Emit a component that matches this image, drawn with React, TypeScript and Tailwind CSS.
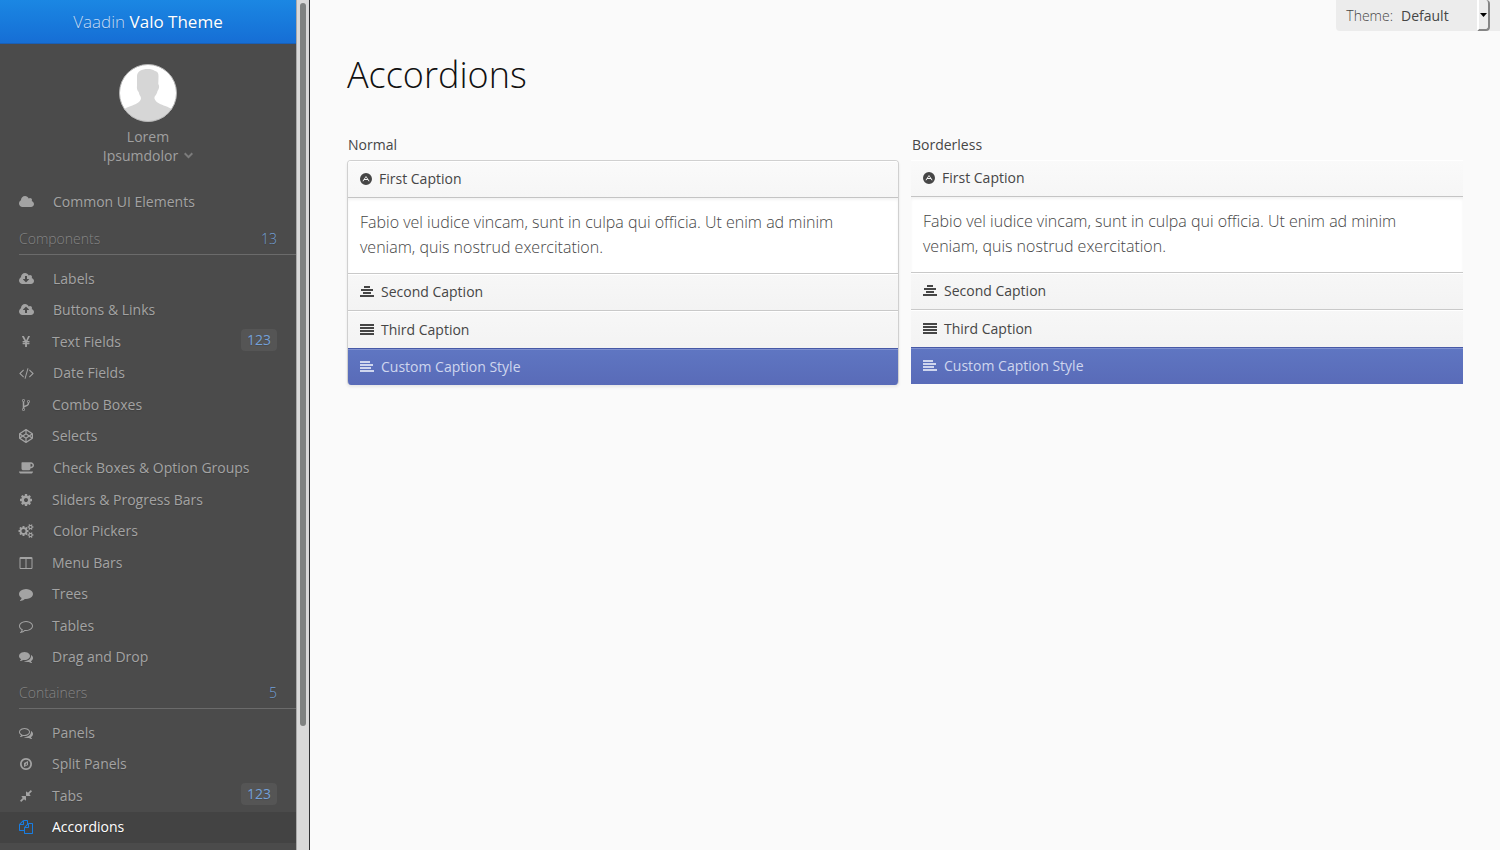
import React from "react";

type Glyph = { d: string; box: string; w: 14 | 15 | 12; evenOdd?: boolean };

const SQ = "0 0 1792 1792";
const WIDE = "0 0 1920 1792";
const CLOUD_BODY =
  "m640 288q0 159-112.5 271.5t-271.5 112.5h-1088q-185 0-316.5-131.5t-131.5-316.5q0-130 70-240t188-165q-2-30-2-43 0-212 150-362t362-150q156 0 285.5 87t188.5 231q71-62 166-62 106 0 181 75t75 181q0 76-41 138 130 31 213.5 135.5t83.5 238.5z";
const BUBBLE =
  "M1792 896q0 174-120 321.5t-326 233-450 85.5q-70 0-145-8-198 175-460 242-49 14-114 22-17 2-30.5-9t-17.5-29v-1q-3-4-.5-12t2-10 4.5-9.5l6-9 7-8.500 8-9q7-8 31-34.5t34.5-38 31-39.5 32.5-51 27-59 26-76q-157-89-247.5-220t-90.5-281q0-130 71-248.5t191-204.5 286-136.5 348-50.5q244 0 450 85.5t326 233 120 321.5z";
const SMALL_COG =
  "v140q0 16-149 31-12 27-30 52 51 113 51 138 0 4-4 7-122 71-124 71-8 0-46-47t-52-68q-20 2-30 2t-30-2q-14 21-52 68t-46 47q-2 0-124-71-4-3-4-7 0-25 51-138-18-25-30-52-149-15-149-31v-140q0-16 149-31 13-29 30-52-51-113-51-138 0-4 4-7 4-2 35-20t59-34 30-16q8 0 46 46.5t52 67.5q20-2 30-2t30 2q51-71 92-112l6-2q4 0 124 70 4 3 4 7 0 25-51 138 17 23 30 52 149 15 149 31z";

const glyphs: Record<string, Glyph> = {
  cloud: {
    w: 15,
    box: "64 0 1920 1792",
    d: "M1984 1152q0 159-112.5 271.5t-271.5 112.5h-1088q-185 0-316.5-131.5t-131.5-316.5q0-132 71-241.5t187-163.5q-2-28-2-43 0-212 150-362t362-150q158 0 286.5 88t187.5 230q70-62 166-62 106 0 181 75t75 181q0 75-41 138 129 30 213 134.5t84 239.5z",
  },
  cloudDown: {
    w: 15,
    box: "64 0 1920 1792",
    d:
      "M1344 928q0-14-9-23t-23-9h-224v-352q0-13-9.5-22.5t-22.5-9.5h-192q-13 0-22.5 9.5t-9.5 22.5v352h-224q-13 0-22.5 9.5t-9.5 22.5q0 14 9 23l352 352q9 9 23 9t23-9l351-351q10-12 10-24zm0-64" +
      CLOUD_BODY,
  },
  cloudUp: {
    w: 15,
    box: "64 0 1920 1792",
    d:
      "M1344 864q0-14-9-23l-352-352q-9-9-23-9t-23 9l-351 351q-10 12-10 24 0 14 9 23t23 9h224v352q0 13 9.5 22.5t22.5 9.5h192q13 0 22.5-9.5t9.5-22.5v-352h224q13 0 22.5-9.5t9.5-22.5z" +
      CLOUD_BODY,
  },
  yen: {
    w: 14,
    box: SQ,
    d: "M985.5 1536h-172q-13 0-22.5-9t-9.5-23v-330h-288q-13 0-22.5-9t-9.5-23v-103q0-13 9.5-22.5t22.5-9.5h288v-85h-288q-13 0-22.5-9t-9.5-23v-104q0-13 9.5-22.5t22.5-9.5h214l-321-578q-8-16 0-32 10-16 28-16h194q19 0 29 18l215 425q19 38 56 125 10-24 30.5-68t27.5-61l191-420q8-19 29-19h191q17 0 27 16 9 14 1 31l-313 579h215q13 0 22.5 9.5t9.5 22.5v104q0 14-9.5 23t-22.5 9h-290v85h290q13 0 22.5 9.5t9.5 22.5v103q0 14-9.5 23t-22.5 9h-290v330q0 13-9.5 22.5t-22.5 9.5z",
  },
  code: {
    w: 15,
    box: "-64 0 1920 1792",
    d: "M553 1399l-50 50q-10 10-23 10t-23-10l-466-466q-10-10-10-23t10-23l466-466q10-10 23-10t23 10l50 50q10 10 10 23t-10 23l-393 393 393 393q10 10 10 23t-10 23zm591-1067l-373 1291q-4 13-15.5 19.5t-23.5 2.5l-62-17q-13-4-19.5-15.5t-2.5-24.5l373-1291q4-13 15.5-19.5t23.5-2.5l62 17q13 4 19.5 15.5t2.5 24.5zm657 651l-466 466q-10 10-23 10t-23-10l-50-50q-10-10-10-23t10-23l393-393-393-393q-10-10-10-23t10-23l50-50q10-10 23-10t23 10l466 466q10 10 10 23t-10 23z",
  },
  fork: {
    w: 14,
    box: SQ,
    d: "M672 1472q0-40-28-68t-68-28-68 28-28 68 28 68 68 28 68-28 28-68zm0-1152q0-40-28-68t-68-28-68 28-28 68 28 68 68 28 68-28 28-68zm640 128q0-40-28-68t-68-28-68 28-28 68 28 68 68 28 68-28 28-68zm96 0q0 52-26 96.5t-70 69.5q-2 287-226 414-67 38-203 81-128 40-169.5 71t-41.5 100v26q44 25 70 69.5t26 96.5q0 80-56 136t-136 56-136-56-56-136q0-52 26-96.5t70-69.5v-820q-44-25-70-69.5t-26-96.5q0-80 56-136t136-56 136 56 56 136q0 52-26 96.5t-70 69.5v497q54-26 154-57 55-17 87.5-29.5t70.5-31 59-39.5 40.5-51 28-69.5 8.5-91.5q-44-25-70-69.5t-26-96.5q0-80 56-136t136-56 136 56 56 136z",
  },
  codepen: {
    w: 14,
    box: SQ,
    d: "M216 1169l603 402v-359l-334-223zm-62-144l193-129-193-129v258zm819 546l603-402-269-180-334 223v359zm-77-494l272-182-272-182-272 182zm-411-274l334-223v-359l-603 402zm960 93l193 129v-258zm-138-93l269-180-603-402v359zm485-180v546q0 41-34 64l-819 546q-21 13-43 13t-43-13l-819-546q-34-23-34-64v-546q0-41 34-64l819-546q21-13 43-13t43 13l819 546q34 23 34 64z",
  },
  coffee: {
    w: 15,
    box: WIDE,
    d: "M1728 544q0-80-56-136t-136-56h-64v384h64q80 0 136-56t56-136zm-1728 800h1792q0 106-75 181t-181 75h-1280q-106 0-181-75t-75-181zm1920-800q0 159-112.5 271.5t-271.5 112.5h-64v32q0 92-66 158t-158 66h-704q-92 0-158-66t-66-158v-736q0-26 19-45t45-19h1152q159 0 271.5 112.5t112.5 271.5z",
  },
  cog: {
    w: 14,
    box: SQ,
    d: "M1152 896q0-106-75-181t-181-75-181 75-75 181 75 181 181 75 181-75 75-181zm512-109v222q0 12-8 23t-20 13l-185 28q-19 54-39 91 35 50 107 138 10 12 10 25t-9 23q-27 37-99 108t-94 71q-12 0-26-9l-138-108q-44 23-91 38-16 136-29 186-7 28-36 28h-222q-14 0-24.5-8.5t-11.5-21.5l-28-184q-49-16-90-37l-141 107q-10 9-25 9-14 0-25-11-126-114-165-168-7-10-7-23 0-12 8-23 15-21 51-66.5t54-70.5q-27-50-41-99l-183-27q-13-2-21-12.5t-8-23.5v-222q0-12 8-23t19-13l186-28q14-46 39-92-40-57-107-138-10-12-10-24 0-10 9-23 26-36 98.5-107.5t94.5-71.5q13 0 26 10l138 107q44-23 91-38 16-136 29-186 7-28 36-28h222q14 0 24.5 8.5t11.5 21.5l28 184q49 16 90 37l142-107q9-9 24-9 13 0 25 10 129 119 165 170 7 8 7 22 0 12-8 23-15 21-51 66.5t-54 70.5q26 50 41 98l183 28q13 2 21 12.5t8 23.5z",
  },
  cogs: {
    w: 15,
    box: WIDE,
    d:
      "M832 896q0-106-75-181t-181-75-181 75-75 181 75 181 181 75 181-75 75-181zm768 512q0-52-38-90t-90-38-90 38-38 90q0 53 37.5 90.5t90.5 37.5 90.5-37.5 37.5-90.5zm0-1024q0-52-38-90t-90-38-90 38-38 90q0 53 37.5 90.5t90.5 37.5 90.5-37.5 37.5-90.5zm-384 421v185q0 10-7 19.5t-16 10.5l-155 24q-11 35-32 76 34 48 90 115 7 11 7 20 0 12-7 19-23 30-82.5 89.5t-78.5 59.5q-11 0-21-7l-115-90q-37 19-77 31-11 108-23 155-7 24-30 24h-186q-11 0-20-7.5t-10-17.5l-23-153q-34-10-75-31l-118 89q-7 7-20 7-11 0-21-8-144-133-144-160 0-9 7-19 10-14 41-53t47-61q-23-44-35-82l-152-24q-10-1-17-9.5t-7-19.5v-185q0-10 7-19.5t16-10.5l155-24q11-35 32-76-34-48-90-115-7-11-7-20 0-12 7-20 22-30 82-89t79-59q11 0 21 7l115 90q34-18 77-32 11-108 23-154 7-24 30-24h186q11 0 20 7.5t10 17.5l23 153q34 10 75 31l118-89q8-7 20-7 11 0 21 8 144 133 144 160 0 8-7 19-12 16-42 54t-45 60q23 48 34 82l152 23q10 2 17 10.5t7 19.5zM1856 1338" +
      SMALL_COG +
      "M1856 314" +
      SMALL_COG,
  },
  columns: {
    w: 14,
    box: SQ,
    d: "M224 1536h608v-1152h-640v1120q0 13 9.5 22.5t22.5 9.5zm1376-32v-1120h-640v1152h608q13 0 22.5-9.5t9.5-22.5zm128-1216v1216q0 66-47 113t-113 47h-1344q-66 0-113-47t-47-113v-1216q0-66 47-113t113-47h1344q66 0 113 47t47 113z",
  },
  comment: { w: 14, box: SQ, d: BUBBLE },
  commentO: {
    w: 14,
    box: SQ,
    evenOdd: true,
    d:
      BUBBLE +
      "M896 384q-204 0-381.5 69.5t-282 187.5-104.5 255q0 112 71.5 213.5t201.5 175.5l87 50-27 96q-24 91-70 172 152-63 275-171l43-38 57 6q69 8 130 8 204 0 381.5-69.5t282-187.5 104.5-255-104.5-255-282-187.5-381.5-69.5z",
  },
  comments: {
    w: 14,
    box: SQ,
    d: "M1408 768q0 139-94 257t-256.5 186.5-353.5 68.5q-86 0-176-16-124 88-278 128-36 9-86 16h-3q-11 0-20.5-8t-11.5-21q-1-3-1-6.5t.5-6.5 2-6l2.5-5 3.5-5.5 4-5 4.5-5 4-4.5q5-6 23-25t26-29.5 22.5-29 25-38.5 20.5-44q-124-72-195-177t-71-224q0-139 94-257t256.5-186.5 353.5-68.5 353.5 68.5 256.5 186.5 94 257zm384 256q0 120-71 224.5t-195 176.5q10 24 20.5 44t25 38.5 22.5 29 26 29.5 23 25q1 1 4 4.5t4.5 5 4 5 3.5 5.5l2.5 5 2 6 .5 6.5-1 6.5q-3 14-13 22t-22 7q-50-7-86-16-154-40-278-128-90 16-176 16-271 0-472-132 58 4 88 4 161 0 309-45t264-129q125-92 192-212t67-254q0-77-23-152 129 71 204 178t75 230z",
  },
  commentsO: {
    w: 14,
    box: SQ,
    d: "M704 384q-153 0-286 52t-211.5 141-78.5 191q0 82 53 158t149 132l97 56-35 84q34-20 62-39l44-31 53 10q78 14 153 14 153 0 286-52t211.5-141 78.5-191-78.5-191-211.5-141-286-52zm0-128q191 0 353.5 68.5t256.5 186.5 94 257-94 257-256.5 186.5-353.5 68.5q-86 0-176-16-124 88-278 128-36 9-86 16h-3q-11 0-20.5-8t-11.5-21q-1-3-1-6.5t.5-6.5 2-6l2.5-5 3.5-5.5 4-5 4.5-5 4-4.5q5-6 23-25t26-29.5 22.5-29 25-38.5 20.5-44q-124-72-195-177t-71-224q0-139 94-257t256.5-186.5 353.5-68.5zm822 1169q10 24 20.5 44t25 38.5 22.5 29 26 29.5 23 25q1 1 4 4.5t4.5 5 4 5 3.5 5.5l2.5 5 2 6 .5 6.5-1 6.5q-3 14-13 22t-22 7q-50-7-86-16-154-40-278-128-90 16-176 16-271 0-472-132 58 4 88 4 161 0 309-45t264-129q125-92 192-212t67-254q0-77-23-152 129 71 204 178t75 230q0 120-71 224.5t-195 176.5z",
    evenOdd: true,
  },
  compass: {
    w: 14,
    box: SQ,
    evenOdd: true,
    d: "M1152 497v542l-512 256v-542zM768 1088l256-128v-256zM1440 896q0-148-73-273t-198-198-273-73-273 73-198 198-73 273 73 273 198 198 273 73 273-73 198-198 73-273zm224 0q0 209-103 385.5t-279.5 279.5-385.5 103-385.5-103-279.5-279.5-103-385.5 103-385.5 279.5-279.5 385.5-103 385.5 103 279.5 279.5 103 385.5z",
  },
  compress: {
    w: 14,
    box: SQ,
    d: "M896 960v448q0 26-19 45t-45 19-45-19l-144-144-332 332q-10 10-23 10t-23-10l-114-114q-10-10-10-23t10-23l332-332-144-144q-19-19-19-45t19-45 45-19h448q26 0 45 19t19 45zm755-672q0 13-10 23l-332 332 144 144q19 19 19 45t-19 45-45 19h-448q-26 0-45-19t-19-45v-448q0-26 19-45t45-19 45 19l144 144 332-332q10-10 23-10t23 10l114 114q10 10 10 23z",
  },
  files: {
    w: 14,
    box: SQ,
    d: "M1696 384q40 0 68 28t28 68v1216q0 40-28 68t-68 28h-960q-40 0-68-28t-28-68v-288h-544q-40 0-68-28t-28-68v-672q0-40 20-88t48-76l408-408q28-28 76-48t88-20h416q40 0 68 28t28 68v328q68-40 128-40h416zm-544 213l-299 299h299v-299zm-640-384l-299 299h299v-299zm196 647l316-316v-416h-384v416q0 40-28 68t-68 28h-416v640h512v-256q0-40 20-88t48-76zm956 804v-1152h-384v416q0 40-28 68t-68 28h-416v640h896z",
  },
  adn: {
    w: 12,
    box: "128 0 1536 1792",
    evenOdd: true,
    d: "M1664 896A768 768 0 1 1 128 896A768 768 0 1 1 1664 896zM896 500L1360 1180H1230L1120 1020H672L562 1180H432zM896 680L744 908H1048z",
  },
  alignCenter: {
    w: 14,
    box: SQ,
    d: "M512 128h768v256H512zM128 512h1536v256H128zM384 896h1024v256H384zM0 1280h1792v256H0z",
  },
  alignJustify: {
    w: 14,
    box: SQ,
    d: "M0 128h1792v256H0zM0 512h1792v256H0zM0 896h1792v256H0zM0 1280h1792v256H0z",
  },
  alignLeft: {
    w: 14,
    box: SQ,
    d: "M0 128h1280v256H0zM0 512h1664v256H0zM0 896h1408v256H0zM0 1280h1792v256H0z",
  },
};

function Icon({ name, className = "" }: { name: string; className?: string }) {
  const g = glyphs[name];
  return (
    <svg
      aria-hidden="true"
      width={g.w}
      height={14}
      viewBox={g.box}
      fill="currentColor"
      className={`shrink-0 overflow-visible ${className}`}
    >
      <path d={g.d} fillRule={g.evenOdd ? "evenodd" : "nonzero"} />
    </svg>
  );
}

type Item = { icon: string; label: string; badge?: string; active?: boolean };

const components: Item[] = [
  { icon: "cloudDown", label: "Labels" },
  { icon: "cloudUp", label: "Buttons & Links" },
  { icon: "yen", label: "Text Fields", badge: "123" },
  { icon: "code", label: "Date Fields" },
  { icon: "fork", label: "Combo Boxes" },
  { icon: "codepen", label: "Selects" },
  { icon: "coffee", label: "Check Boxes & Option Groups" },
  { icon: "cog", label: "Sliders & Progress Bars" },
  { icon: "cogs", label: "Color Pickers" },
  { icon: "columns", label: "Menu Bars" },
  { icon: "comment", label: "Trees" },
  { icon: "commentO", label: "Tables" },
  { icon: "comments", label: "Drag and Drop" },
];

const containers: Item[] = [
  { icon: "commentsO", label: "Panels" },
  { icon: "compass", label: "Split Panels" },
  { icon: "compress", label: "Tabs", badge: "123" },
  { icon: "files", label: "Accordions", active: true },
];

function MenuItem({ icon, label, badge, active }: Item) {
  return (
    <a
      href="#"
      aria-current={active ? "page" : undefined}
      className={`flex h-full items-center px-[19px] text-sm ${
        active ? "bg-[#434343] text-white" : "text-[#a3a3a3]"
      }`}
    >
      <Icon name={icon} className={active ? "text-[#197de1]" : ""} />
      <span className="ml-[19px] grow whitespace-nowrap">{label}</span>
      {badge && (
        <span className="mb-[3px] rounded bg-[#555] px-1.5 leading-[22px] text-[#73a0d8]">{badge}</span>
      )}
    </a>
  );
}

function Section({ title, count }: { title: string; count: string }) {
  return (
    <h2 className="ml-[19px] flex h-9 items-center justify-between border-b border-[#6b6b6b] pr-[19px] pt-1 text-sm font-light text-[#858585]">
      <span>{title}</span>
      <span className="text-[#73a0d8]">{count}</span>
    </h2>
  );
}

function Avatar() {
  return (
    <svg role="img" aria-label="Profile picture" viewBox="0 0 58 58" className="size-[58px]">
      <defs>
        <clipPath id="avatar-round">
          <circle cx="29" cy="29" r="28.5" />
        </clipPath>
      </defs>
      <circle cx="29" cy="29" r="28.5" fill="#fff" />
      <path
        clipPath="url(#avatar-round)"
        fill="#d6d6d6"
        d="M29 5c3 0 5 .5 6.500 1.800c3 .5 4 2.500 4 5.200l-.2 8c1.300 1.500 1 5-.8 7c-.5 2.500-1.500 4-2.500 5c-.8 1.500-.8 2.500.2 4c1.500 3 6 4.500 10 6c3 1.200 5.300 2 7.300 3.500V60H4V45.500c3-1.700 5-2.500 8-3.500c4-1.500 8-3 9.500-6c.8-1.500.5-2.500-.2-4c-.8-1-1.300-2.500-1.600-4c-1.700-1.500-2-4-1.700-6V12c.2-4.500 4.500-7 11-7z"
      />
      <circle cx="29" cy="29" r="28.500" fill="none" stroke="#b4b4b4" />
    </svg>
  );
}

function Sidebar() {
  return (
    <aside className="flex h-full shrink-0 border-r border-[#2f3133] bg-[#4b4b4b]">
      <nav className="h-full w-[296px] overflow-hidden [text-shadow:0_1px_1px_rgba(0,0,0,0.15)]">
        <div className="flex h-11 items-center justify-center border-b border-[#1a5fb5] bg-linear-to-b from-[#1b87e3] to-[#166ed5] text-[17px] text-white">
          <span className="whitespace-pre font-light text-[#c3dcf7]">Vaadin </span>
          <span>Valo Theme</span>
        </div>
        <button
          type="button"
          className="mx-auto mt-5 flex flex-col items-center text-sm leading-[19px] text-[#a0a0a0]"
        >
          <Avatar />
          <span className="mt-[5px]">Lorem</span>
          <span className="flex items-center gap-1.5">
            Ipsumdolor
            <svg aria-hidden="true" width="9" height="7" viewBox="0 0 9 7" fill="none" stroke="#7c7c7c" strokeWidth="2">
              <path d="M.7 1.300L4.500 5.100L8.300 1.300" />
            </svg>
          </span>
        </button>
        <div className="mb-px mt-[21px] h-8">
          <MenuItem icon="cloud" label="Common UI Elements" />
        </div>
        <Section title="Components" count="13" />
        <ul className="mt-2 grid h-[410px] auto-rows-fr">
          {components.map((item) => (
            <li key={item.label}>
              <MenuItem {...item} />
            </li>
          ))}
        </ul>
        <Section title="Containers" count="5" />
        <ul className="mt-2 grid h-[126px] auto-rows-fr">
          {containers.map((item) => (
            <li key={item.label}>
              <MenuItem {...item} />
            </li>
          ))}
        </ul>
      </nav>
      <div aria-hidden="true" className="h-full w-[13px] border-l border-[#a9a9a9] bg-[#d9d9d9] px-[3px] pt-[3px]">
        <div className="h-[85.4%] w-1.5 rounded-full bg-[#7f8281]" />
      </div>
    </aside>
  );
}

function Caption({ icon, label, custom }: { icon: string; label: string; custom?: boolean }) {
  return (
    <button
      type="button"
      className={`flex w-full items-center gap-[7px] px-3 text-left text-sm ${
        custom
          ? "h-[37px] border-t border-[#4759a6] bg-linear-to-b from-[#5f76c2] to-[#596bb8] text-[#cfd6ee] shadow-[inset_0_1px_0_#8091d0]"
          : "h-[37px] border-t border-[#c9c9c9] bg-linear-to-b from-[#f7f7f7] to-[#f3f3f3] text-[#464646] shadow-[inset_0_1px_0_#fff] nth-2:h-[38px] nth-2:pt-px"
      }`}
    >
      <Icon name={icon} />
      <span>{label}</span>
    </button>
  );
}

function Accordion({ title, bordered }: { title: string; bordered?: boolean }) {
  return (
    <section>
      <h2 className="px-px text-sm leading-5 text-[#464646]">{title}</h2>
      <div
        className={
          bordered
            ? "mt-[5px] overflow-hidden rounded border border-b-0 border-[#d0d0d0] shadow-[0_2px_3px_rgba(0,0,0,0.08)]"
            : "mt-[5px]"
        }
      >
        <button
          type="button"
          aria-expanded="true"
          className="flex h-[37px] w-full items-center gap-[7px] border-b border-[#c4c4c4] bg-linear-to-b from-[#fafafa] to-[#f6f6f6] px-3 text-left text-sm text-[#464646] shadow-[inset_0_1px_0_#fff]"
        >
          <Icon name="adn" />
          <span>First Caption</span>
        </button>
        <p className="bg-white px-3 pb-[13px] pt-3 text-base font-light leading-[25px] text-[#464646] shadow-[inset_0_2px_3px_rgba(0,0,0,0.05)]">
          Fabio vel iudice vincam, sunt in culpa qui officia. Ut enim ad minim veniam, quis nostrud exercitation.
        </p>
        <div>
          <Caption icon="alignCenter" label="Second Caption" />
          <Caption icon="alignJustify" label="Third Caption" />
          <Caption icon="alignLeft" label="Custom Caption Style" custom />
        </div>
      </div>
    </section>
  );
}

function ThemePicker() {
  return (
    <div className="absolute right-0 top-0 flex h-[31px] items-center rounded-bl bg-[#ececec] pl-2.5 pr-2.5 text-sm text-[#464646]">
      <label htmlFor="theme" className="mr-2 font-light">
        Theme:
      </label>
      <div className="relative h-full">
        <select id="theme" className="h-full w-[89px] appearance-none bg-transparent outline-none">
          <option>Default</option>
        </select>
        <span
          aria-hidden="true"
          className="pointer-events-none absolute inset-y-0 right-0 flex w-[13px] items-center justify-center rounded-r-sm border-b-2 border-l-2 border-r-2 border-b-[#858585] border-l-white border-r-[#858585]"
        >
          <svg width="7" height="4" viewBox="0 0 7 4">
            <path d="M0 0h7L3.500 4z" />
          </svg>
        </span>
      </div>
    </div>
  );
}

export default function App() {
  return (
    <div className="flex h-screen overflow-hidden bg-[#fafafa] font-['Open_Sans',sans-serif]">
      <Sidebar />
      <main className="relative min-w-0 grow overflow-auto px-[37px] pt-12">
        <ThemePicker />
        <h1 className="text-4xl font-light leading-[54px] text-[#111]">Accordions</h1>
        <div className="mt-[33px] grid grid-cols-2 gap-3">
          <Accordion title="Normal" bordered />
          <Accordion title="Borderless" />
        </div>
      </main>
    </div>
  );
}
